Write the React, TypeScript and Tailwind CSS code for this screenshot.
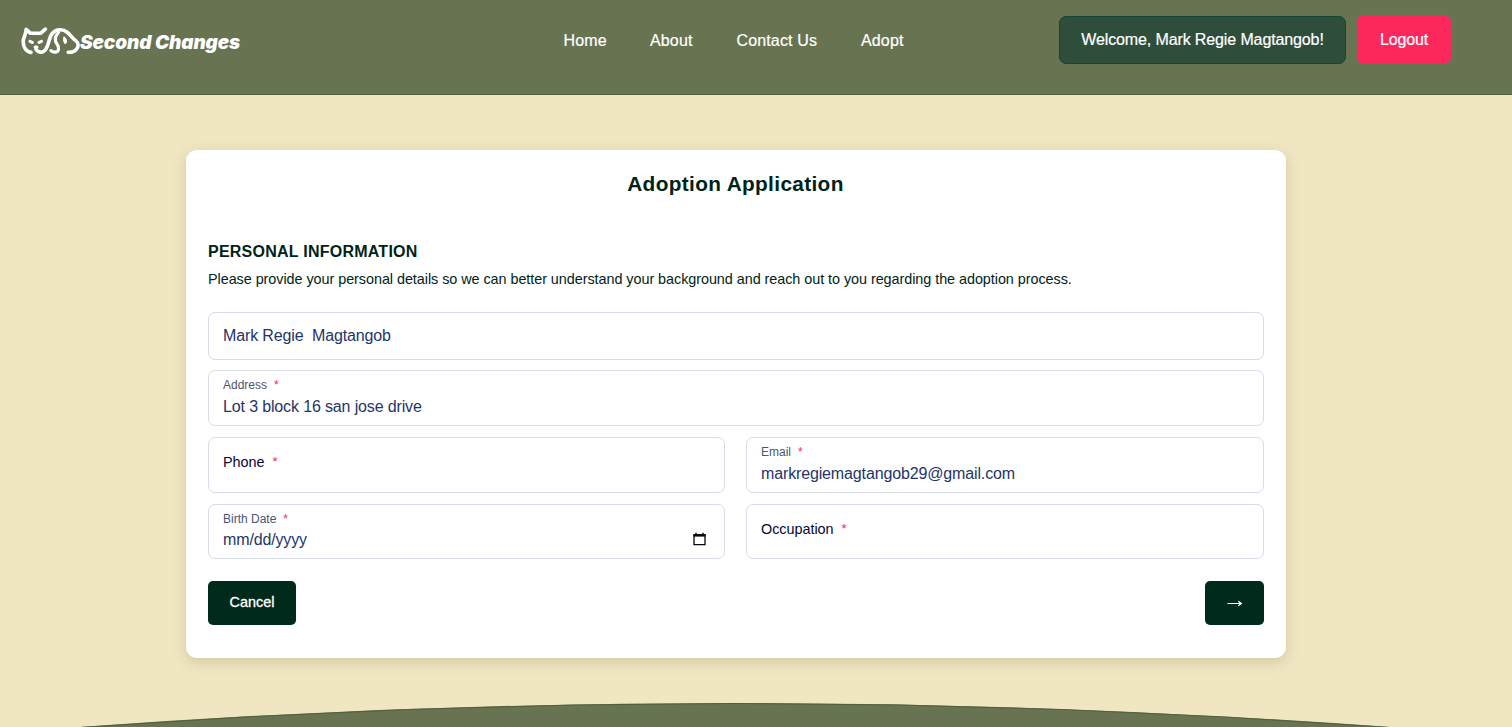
import type { ReactNode } from 'react';

const navItems = [
  { label: 'Home', width: 'w-[43px]' },
  { label: 'About', width: 'w-[43px]' },
  { label: 'Contact Us', width: 'w-[81px]' },
  { label: 'Adopt', width: 'w-[43px]' },
];

function Logo() {
  return (
    <a className="flex w-[240px] items-center text-white" href="#">
      <svg className="-mt-[2px] h-[30px] w-[59px] shrink-0" viewBox="0 0 59 30" fill="none" stroke="currentColor" strokeWidth="3.6" strokeLinecap="round" strokeLinejoin="round">
        <path d="M10 26.4C5 26 2.2 21 2.2 15.5C2.2 11 5 9 5.2 3.4L9.5 7.3H19.5L24.4 3.2" />
        <path d="M15 21.5v1.7c2 3.5 6.8 4.2 9.4.6C29 18 27 12 31.5 7.2C35.5 2.8 42 2.8 46.5 6.5c3.4 2.9 5.6 6.7 8.6 8.6c2.7 1.9 2.8 5.7 0 8.6c-2.2 2.3-4.7 2.8-7.9 2.5" />
        <path d="M37.5 6.5c-4 4.2-4.3 7.6-1.6 11.3c2.9 4 2.1 8.4-2 8.4c-1.8 0-3-.5-4-1.5" strokeWidth="3.2" />
        <path d="M9 15.4l2.3 1M20.4 15.4l-2.3 1M14.2 21h1.7" strokeWidth="3.2" />
        <path d="M43.2 11.5c-.5 2.3-.1 4.2 1 5.5c1.1-.8 1.1-2.4.2-3.9" strokeWidth="2" />
      </svg>
      <span className="mt-[3px] whitespace-nowrap font-[Inter] text-[19px] font-black italic leading-[28px] tracking-[-0.12px]">Second Changes</span>
    </a>
  );
}

function Label({ text, small }: { text: string; small?: boolean }) {
  return (
    <span className={small ? 'flex gap-[7px] text-[12px] leading-[14px] text-[#4b5672]' : 'flex gap-[8px] text-[14.4px] leading-[18px] tracking-[-0.03px] text-[#030735]'}>
      <span>{text}</span>
      <span className={small ? 'text-[#f5265c]' : 'text-[13px] text-[#f5265c]'}>*</span>
    </span>
  );
}

function Field({ label, value, height, children }: { label: string; value?: string; height: string; children?: ReactNode }) {
  return (
    <div className={`${height} rounded-[7px] border border-[#d9dcea] px-[14px] ${value ? 'pt-[7px]' : 'pt-[15px]'}`}>
      <Label text={label} small={!!value} />
      {value && (
        <div className={`${children ? 'mt-[4px]' : 'mt-[5px]'} flex items-center justify-between text-[16px] leading-[20px] tracking-[-0.14px] text-[#253569]`}>
          <span>{value}</span>
          {children}
        </div>
      )}
    </div>
  );
}

function CalendarIcon() {
  return (
    <svg className="-mt-[2px] mr-[4px] h-[14px] w-[13px]" viewBox="0 0 13 14" fill="none" stroke="#080b0b">
      <path d="M1 3h11v9.7H1z" strokeWidth="1.3" />
      <path d="M.5 3.3h12" strokeWidth="2.6" />
      <path d="M3 .8v2M10 .8v2" strokeWidth="1.4" />
    </svg>
  );
}

export default function App() {
  return (
    <div className="flex h-[727px] w-full flex-col overflow-hidden bg-[#f0e6c2] font-['Liberation_Sans',Arial,sans-serif]">
      <header className="flex h-[95px] shrink-0 items-start justify-between border-b border-[#4d623c] bg-[#687451] pl-[21px] pr-[61px]">
        <div className="pt-[26px]"><Logo /></div>
        <nav className="ml-[302.5px] flex gap-[43.5px] pt-[31px] text-[16px] leading-[20px] tracking-[0.14px] text-white [-webkit-text-stroke:0.2px_white]">
          {navItems.map(item => <a key={item.label} href="#" className={`${item.width} whitespace-nowrap`}>{item.label}</a>)}
        </nav>
        <div className="ml-auto flex gap-[11px] pt-[15px] text-[16px] tracking-[-0.12px] text-white [-webkit-text-stroke:0.2px_white]">
          <div className="mt-px flex h-[48px] w-[287px] items-center justify-center whitespace-nowrap rounded-[7px] border border-[#124636] bg-[#2f4d3b]">Welcome, Mark Regie Magtangob!</div>
          <button className="h-[49px] w-[94px] rounded-[7px] bg-[#fb275d]">Logout</button>
        </div>
      </header>

      <main className="ml-[186px] mt-[55px] h-[508px] w-[1100px] shrink-0 rounded-[11px] bg-white px-[22px] shadow-[0_4px_14px_rgba(80,70,20,0.18)]">
        <h1 className="-ml-px pt-[20px] text-center text-[20.8px] font-bold leading-[28px] tracking-[0.35px] text-[#002318]">Adoption Application</h1>
        <h2 className="mt-[44px] text-[16px] font-bold leading-[20px] tracking-[0.24px] text-[#002318]">PERSONAL INFORMATION</h2>
        <p className="mt-[7px] whitespace-nowrap text-[14.4px] leading-[20px] tracking-[-0.05px] text-[#002318]">Please provide your personal details so we can better understand your background and reach out to you regarding the adoption process.</p>
        <form className="mt-[23px]">
          <div className="flex h-[48px] items-center whitespace-pre rounded-[7px] border border-[#d9dcea] px-[14px] text-[16px] tracking-[-0.14px] text-[#253569]">Mark Regie  Magtangob</div>
          <div className="mt-[10px]"><Field label="Address" value="Lot 3 block 16 san jose drive" height="h-[56px]" /></div>
          <div className="mt-[11px] grid grid-cols-[517px_518px] gap-x-[21px] gap-y-[11px]">
            <Field label="Phone" height="h-[56px]" />
            <Field label="Email" value="markregiemagtangob29@gmail.com" height="h-[56px]" />
            <Field label="Birth Date" value="mm/dd/yyyy" height="h-[55px]"><CalendarIcon /></Field>
            <Field label="Occupation" height="h-[55px]" />
          </div>
          <div className="mt-[22px] flex justify-between">
            <button type="button" className="h-[44px] w-[88px] rounded-[5px] bg-[#002a1b] text-[14.4px] text-white [-webkit-text-stroke:0.3px_white]">Cancel</button>
            <button type="button" aria-label="Next" className="flex h-[44px] w-[59px] items-center justify-center rounded-[5px] bg-[#002a1b] text-white">
              <svg className="h-[7px] w-[16px]" viewBox="0 0 16 7" fill="none" stroke="currentColor"><path d="M.5 3.5h14" /><path d="M11.3 1.2l3 2.3-3 2.3" strokeWidth="1.3" /></svg>
            </button>
          </div>
        </form>
      </main>
      <footer className="mt-[45px] h-[24px] shrink-0">
        <svg className="ml-[80px] h-[24px] w-[1310px]" viewBox="0 0 1310 24" fill="none">
          <path d="M0 24Q655-24 1310 24z" fill="#687451" />
          <path d="M0 24.5Q655-23.5 1310 24.5" stroke="#4d623c" />
        </svg>
      </footer>
    </div>
  );
}
